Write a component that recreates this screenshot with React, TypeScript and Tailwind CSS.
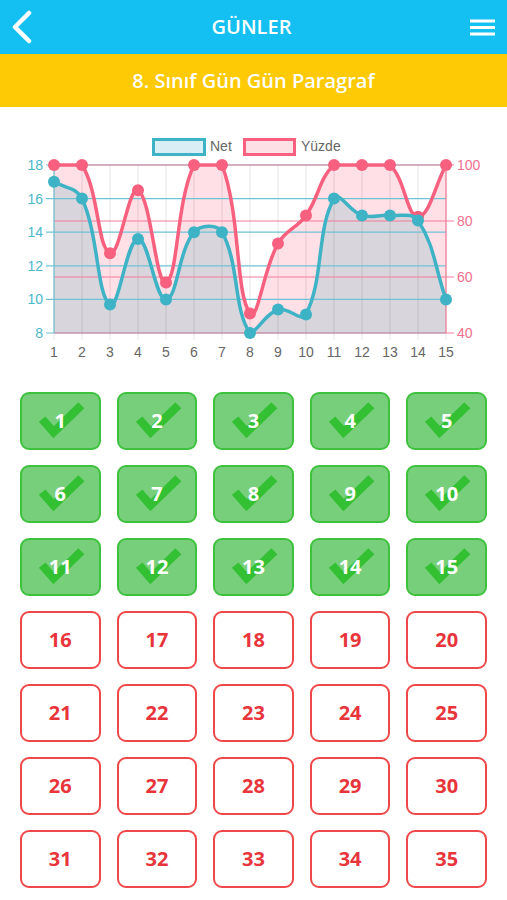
import React from "react";

const NET = [17, 16, 9.7, 13.6, 10, 14, 14, 8, 9.4, 9.1, 16, 15, 15, 14.7, 10];
const PCT = [100, 100, 68.5, 91, 58, 100, 100, 47, 72, 82, 100, 100, 100, 81.5, 100];

const LEFT = 54;
const RIGHT = 446;
const TOP = 165;
const BOTTOM = 333;

const xAt = (i: number) => LEFT + ((RIGHT - LEFT) / 14) * i;
const yNet = (v: number) => BOTTOM - ((v - 8) / 10) * (BOTTOM - TOP);
const yPct = (v: number) => BOTTOM - ((v - 40) / 60) * (BOTTOM - TOP);

type Pt = { x: number; y: number };

// same control point math as chart.js with tension 0.4
function smoothPath(pts: Pt[], t = 0.4) {
  const ctrl = pts.map((cur, i) => {
    const prev = pts[i - 1] ?? cur;
    const next = pts[i + 1] ?? cur;
    const d01 = Math.hypot(cur.x - prev.x, cur.y - prev.y);
    const d12 = Math.hypot(next.x - cur.x, next.y - cur.y);
    let s01 = d01 / (d01 + d12);
    let s12 = d12 / (d01 + d12);
    if (isNaN(s01)) s01 = 0;
    if (isNaN(s12)) s12 = 0;
    const fa = t * s01;
    const fb = t * s12;
    const clampY = (y: number) => Math.min(BOTTOM, Math.max(TOP, y));
    return {
      prev: { x: cur.x - fa * (next.x - prev.x), y: clampY(cur.y - fa * (next.y - prev.y)) },
      next: { x: cur.x + fb * (next.x - prev.x), y: clampY(cur.y + fb * (next.y - prev.y)) },
    };
  });
  let d = `M${pts[0].x},${pts[0].y}`;
  for (let i = 1; i < pts.length; i++) {
    const a = ctrl[i - 1].next;
    const b = ctrl[i].prev;
    d += ` C${a.x},${a.y} ${b.x},${b.y} ${pts[i].x},${pts[i].y}`;
  }
  return d;
}

function Chart() {
  const netPts = NET.map((v, i) => ({ x: xAt(i), y: yNet(v) }));
  const pctPts = PCT.map((v, i) => ({ x: xAt(i), y: yPct(v) }));
  const netLine = smoothPath(netPts);
  const pctLine = smoothPath(pctPts);
  const close = ` L${RIGHT},${BOTTOM} L${LEFT},${BOTTOM} Z`;
  const leftTicks = [18, 16, 14, 12, 10, 8];
  const rightTicks = [100, 80, 60, 40];
  const font = { fontFamily: "'Liberation Sans', Arial, sans-serif" };

  return (
    <svg width={507} height={273} viewBox="0 107 507 273" className="block">
      {/* legend */}
      <rect x={153.5} y={139.5} width={51} height={15} fill="#d9eff5" stroke="#3fb3c6" strokeWidth={3} />
      <text x={210} y={151} fontSize={14} fill="#666" style={font}>Net</text>
      <rect x={244.5} y={139.5} width={50} height={15} fill="#fde0e6" stroke="#f7607f" strokeWidth={3} />
      <text x={301} y={151} fontSize={14} fill="#666" style={font}>Yüzde</text>

      {/* fills */}
      <path d={pctLine + close} fill="rgba(255,99,132,0.2)" />
      <path d={netLine + close} fill="rgba(60,168,182,0.2)" />

      {/* vertical grid */}
      {NET.map((_, i) => (
        <line key={i} x1={xAt(i)} x2={xAt(i)} y1={TOP} y2={BOTTOM + 7} stroke="rgba(0,0,0,0.1)" strokeWidth={1} />
      ))}

      {/* left axis grid */}
      {leftTicks.map((v) => (
        <line key={v} x1={LEFT - 8} x2={RIGHT} y1={yNet(v)} y2={yNet(v)} stroke="#6ec3d4" strokeWidth={1.2} />
      ))}
      {/* right axis grid */}
      {rightTicks.map((v) => (
        <line key={v} x1={LEFT} x2={RIGHT + 8} y1={yPct(v)} y2={yPct(v)} stroke="#f07d97" strokeWidth={1.2} />
      ))}
      <line x1={LEFT} x2={LEFT} y1={TOP} y2={BOTTOM} stroke="#6ec3d4" strokeWidth={1.2} />
      <line x1={RIGHT} x2={RIGHT} y1={TOP} y2={BOTTOM} stroke="#f07d97" strokeWidth={1.2} />

      {leftTicks.map((v) => (
        <text key={v} x={43} y={yNet(v) + 5} fontSize={14} fill="#4db7cb" textAnchor="end" style={font}>
          {v}
        </text>
      ))}
      {rightTicks.map((v) => (
        <text key={v} x={457} y={yPct(v) + 5} fontSize={14} fill="#f0708f" style={font}>
          {v}
        </text>
      ))}
      {NET.map((_, i) => (
        <text key={i} x={xAt(i)} y={357} fontSize={14} fill="#666" textAnchor="middle" style={font}>
          {i + 1}
        </text>
      ))}

      {/* lines */}
      <path d={pctLine} fill="none" stroke="#f7607f" strokeWidth={3.5} />
      {pctPts.map((p, i) => (
        <circle key={i} cx={p.x} cy={p.y} r={6} fill="#f7607f" />
      ))}
      <path d={netLine} fill="none" stroke="#3fb3c6" strokeWidth={3.5} />
      {netPts.map((p, i) => (
        <circle key={i} cx={p.x} cy={p.y} r={6} fill="#3fb3c6" />
      ))}
    </svg>
  );
}

function DayButton({ n, done }: { n: number; done: boolean }) {
  if (done) {
    return (
      <div className="relative flex h-[58px] items-center justify-center rounded-[9px] border-2 border-[#3ec23e] bg-[#78cf7b]">
        <svg className="absolute inset-0 h-full w-full" viewBox="0 0 80 58" preserveAspectRatio="none">
          <polyline points="21,27 33,41 62,12" fill="none" stroke="#33c133" strokeWidth={9} strokeLinejoin="miter" />
        </svg>
        <span className="relative text-[20px] font-bold text-white">{n}</span>
      </div>
    );
  }
  return (
    <div className="flex h-[58px] items-center justify-center rounded-[9px] border-2 border-[#f04848] bg-white">
      <span className="text-[20px] font-bold text-[#e8353b]">{n}</span>
    </div>
  );
}

export default function App() {
  return (
    <div className="w-[507px] min-h-[900px] bg-white font-['Open_Sans',sans-serif]">
      <div className="flex h-[54px] items-center justify-between bg-[#14c0f2] px-[10px]">
        <svg width="24" height="34" viewBox="0 0 24 34">
          <polyline points="19,3 5,17 19,31" fill="none" stroke="white" strokeWidth={4.5} strokeLinecap="round" strokeLinejoin="round" />
        </svg>
        <div className="text-[20px] font-semibold text-white">GÜNLER</div>
        <svg width="28" height="24" viewBox="0 0 28 24">
          <rect x="1" y="4.5" width="25" height="3" fill="white" />
          <rect x="1" y="11" width="25" height="3" fill="white" />
          <rect x="1" y="17.5" width="25" height="3" fill="white" />
        </svg>
      </div>
      <div className="flex h-[53px] items-center justify-center bg-[#fec905]">
        <div className="text-[20px] font-semibold text-white">8. Sınıf Gün Gün Paragraf</div>
      </div>
      <Chart />
      <div className="grid grid-cols-5 gap-x-4 gap-y-[15px] px-[20px] pt-3">
        {Array.from({ length: 35 }, (_, i) => (
          <DayButton key={i} n={i + 1} done={i < 15} />
        ))}
      </div>
    </div>
  );
}
